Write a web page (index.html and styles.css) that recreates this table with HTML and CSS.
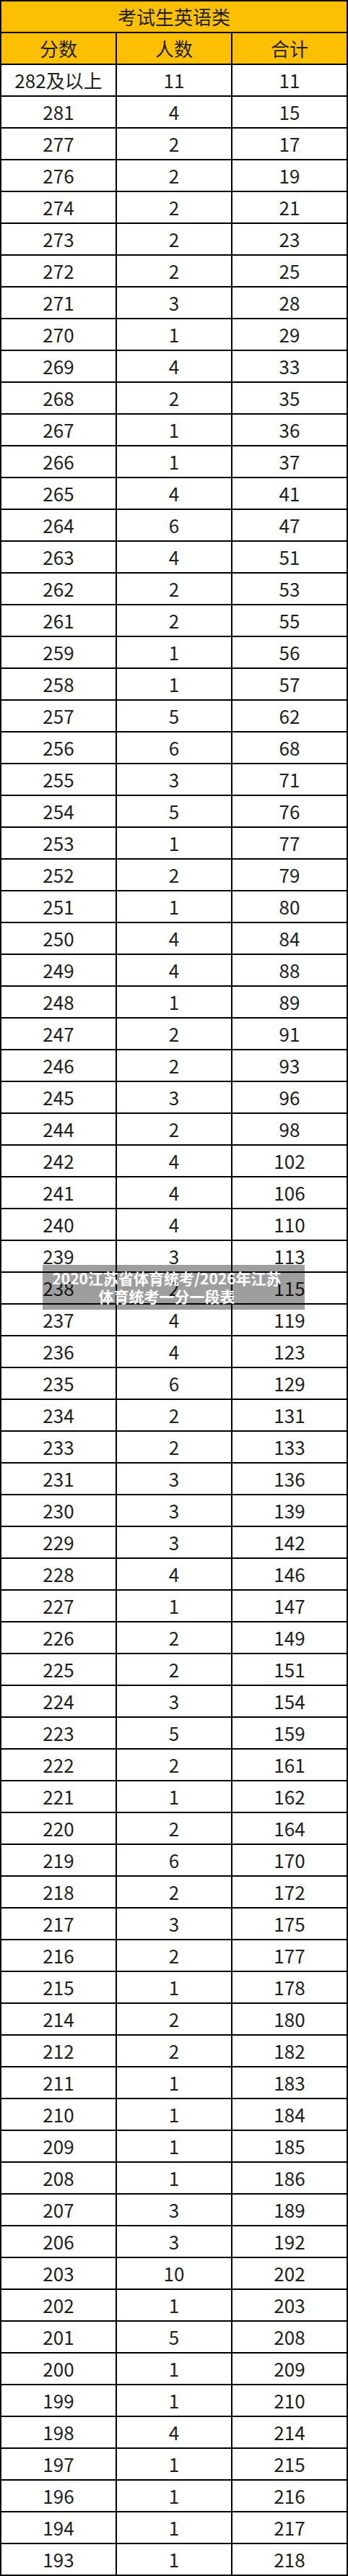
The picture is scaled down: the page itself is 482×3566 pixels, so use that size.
FILE: index.html
```html
<!DOCTYPE html>
<html lang="zh-CN">
<head>
<meta charset="utf-8">
<title>考试生英语类</title>
<link rel="stylesheet" href="styles.css">
</head>
<body>
<div class="page">
<table class="score-table">
<colgroup><col class="c"><col class="c"><col class="c"></colgroup>
<thead>
<tr class="head"><th colspan="3">考试生英语类</th></tr>
<tr class="head"><th>分数</th><th>人数</th><th>合计</th></tr>
</thead>
<tbody>
<tr><td>282及以上</td><td>11</td><td>11</td></tr>
<tr><td>281</td><td>4</td><td>15</td></tr>
<tr><td>277</td><td>2</td><td>17</td></tr>
<tr><td>276</td><td>2</td><td>19</td></tr>
<tr><td>274</td><td>2</td><td>21</td></tr>
<tr><td>273</td><td>2</td><td>23</td></tr>
<tr><td>272</td><td>2</td><td>25</td></tr>
<tr><td>271</td><td>3</td><td>28</td></tr>
<tr><td>270</td><td>1</td><td>29</td></tr>
<tr><td>269</td><td>4</td><td>33</td></tr>
<tr><td>268</td><td>2</td><td>35</td></tr>
<tr><td>267</td><td>1</td><td>36</td></tr>
<tr><td>266</td><td>1</td><td>37</td></tr>
<tr><td>265</td><td>4</td><td>41</td></tr>
<tr><td>264</td><td>6</td><td>47</td></tr>
<tr><td>263</td><td>4</td><td>51</td></tr>
<tr><td>262</td><td>2</td><td>53</td></tr>
<tr><td>261</td><td>2</td><td>55</td></tr>
<tr><td>259</td><td>1</td><td>56</td></tr>
<tr><td>258</td><td>1</td><td>57</td></tr>
<tr><td>257</td><td>5</td><td>62</td></tr>
<tr><td>256</td><td>6</td><td>68</td></tr>
<tr><td>255</td><td>3</td><td>71</td></tr>
<tr><td>254</td><td>5</td><td>76</td></tr>
<tr><td>253</td><td>1</td><td>77</td></tr>
<tr><td>252</td><td>2</td><td>79</td></tr>
<tr><td>251</td><td>1</td><td>80</td></tr>
<tr><td>250</td><td>4</td><td>84</td></tr>
<tr><td>249</td><td>4</td><td>88</td></tr>
<tr><td>248</td><td>1</td><td>89</td></tr>
<tr><td>247</td><td>2</td><td>91</td></tr>
<tr><td>246</td><td>2</td><td>93</td></tr>
<tr><td>245</td><td>3</td><td>96</td></tr>
<tr><td>244</td><td>2</td><td>98</td></tr>
<tr><td>242</td><td>4</td><td>102</td></tr>
<tr><td>241</td><td>4</td><td>106</td></tr>
<tr><td>240</td><td>4</td><td>110</td></tr>
<tr><td>239</td><td>3</td><td>113</td></tr>
<tr><td>238</td><td>2</td><td>115</td></tr>
<tr><td>237</td><td>4</td><td>119</td></tr>
<tr><td>236</td><td>4</td><td>123</td></tr>
<tr><td>235</td><td>6</td><td>129</td></tr>
<tr><td>234</td><td>2</td><td>131</td></tr>
<tr><td>233</td><td>2</td><td>133</td></tr>
<tr><td>231</td><td>3</td><td>136</td></tr>
<tr><td>230</td><td>3</td><td>139</td></tr>
<tr><td>229</td><td>3</td><td>142</td></tr>
<tr><td>228</td><td>4</td><td>146</td></tr>
<tr><td>227</td><td>1</td><td>147</td></tr>
<tr><td>226</td><td>2</td><td>149</td></tr>
<tr><td>225</td><td>2</td><td>151</td></tr>
<tr><td>224</td><td>3</td><td>154</td></tr>
<tr><td>223</td><td>5</td><td>159</td></tr>
<tr><td>222</td><td>2</td><td>161</td></tr>
<tr><td>221</td><td>1</td><td>162</td></tr>
<tr><td>220</td><td>2</td><td>164</td></tr>
<tr><td>219</td><td>6</td><td>170</td></tr>
<tr><td>218</td><td>2</td><td>172</td></tr>
<tr><td>217</td><td>3</td><td>175</td></tr>
<tr><td>216</td><td>2</td><td>177</td></tr>
<tr><td>215</td><td>1</td><td>178</td></tr>
<tr><td>214</td><td>2</td><td>180</td></tr>
<tr><td>212</td><td>2</td><td>182</td></tr>
<tr><td>211</td><td>1</td><td>183</td></tr>
<tr><td>210</td><td>1</td><td>184</td></tr>
<tr><td>209</td><td>1</td><td>185</td></tr>
<tr><td>208</td><td>1</td><td>186</td></tr>
<tr><td>207</td><td>3</td><td>189</td></tr>
<tr><td>206</td><td>3</td><td>192</td></tr>
<tr><td>203</td><td>10</td><td>202</td></tr>
<tr><td>202</td><td>1</td><td>203</td></tr>
<tr><td>201</td><td>5</td><td>208</td></tr>
<tr><td>200</td><td>1</td><td>209</td></tr>
<tr><td>199</td><td>1</td><td>210</td></tr>
<tr><td>198</td><td>4</td><td>214</td></tr>
<tr><td>197</td><td>1</td><td>215</td></tr>
<tr><td>196</td><td>1</td><td>216</td></tr>
<tr><td>194</td><td>1</td><td>217</td></tr>
<tr><td>193</td><td>1</td><td>218</td></tr>
</tbody>
</table>
<div class="caption">2020江苏省体育统考/2026年江苏<br>体育统考一分一段表</div>
</div>
</body>
</html>
```
FILE: styles.css
```css
html, body {
  margin: 0;
  padding: 0;
  background: #ffffff;
}

.page {
  position: relative;
  width: 482px;
  font-family: "Noto Sans CJK SC", "Noto Sans", sans-serif;
}

.score-table {
  width: 482px;
  border-collapse: collapse;
  table-layout: fixed;
  border: 2px solid #000;
}

.score-table .c {
  width: 33.333%;
}

.score-table th,
.score-table td {
  height: 44px;
  box-sizing: border-box;
  padding: 0;
  border: 2px solid #000;
  text-align: center;
  vertical-align: middle;
  font-size: 26px;
  font-weight: 400;
  line-height: 36px;
  color: #1e1e1e;
  white-space: nowrap;
}

.score-table .head th {
  background: #fcc000;
}

.caption {
  position: absolute;
  left: 59px;
  top: 1751px;
  width: 363px;
  height: 62px;
  box-sizing: border-box;
  padding: 6px 19px 0 0;
  background: rgba(0, 0, 0, 0.38);
  color: #ffffff;
  font-size: 21px;
  font-weight: 700;
  line-height: 25px;
  text-align: center;
  white-space: nowrap;
}
```
